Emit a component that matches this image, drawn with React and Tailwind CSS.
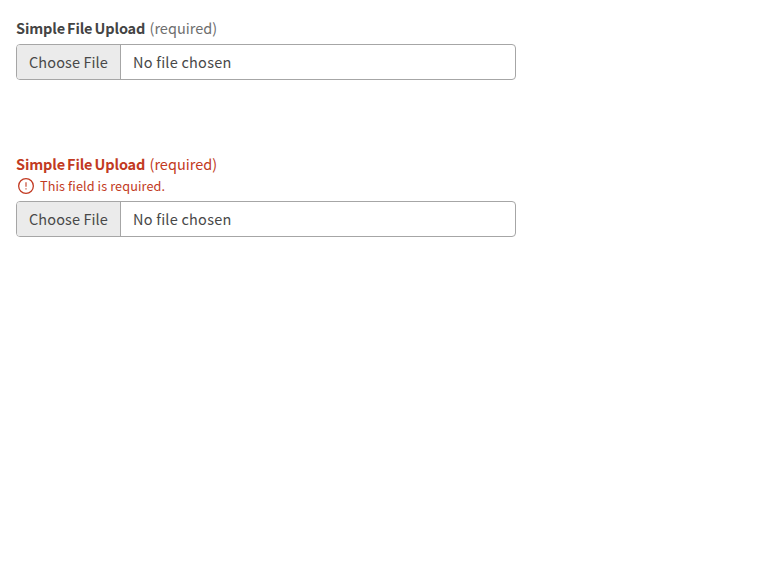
function AlertIcon() {
  return (
    <svg className="-mt-0.5 block size-4 shrink-0" viewBox="0 0 16 16" fill="none" stroke="currentColor">
      <circle cx="8" cy="8" r="7.35" strokeWidth="1.3" />
      <path d="M8 4.2v4.6" strokeWidth="1.1" />
      <path d="M8 10.3v1.3" strokeWidth="1.1" />
    </svg>
  );
}

function FileField({ error }) {
  return (
    <div className="w-[500px]">
      <div className={"flex h-6 items-center whitespace-nowrap text-[14.5px] " + (error ? "text-[#c23a22]" : "text-[#444444]")}>
        <span className="w-[133.5px] font-bold tracking-[-0.14px] [word-spacing:-1px]">Simple File Upload</span>
        <span className={error ? "" : "text-[#6e6e6e]"}>(required)</span>
      </div>
      {error && (
        <div className="flex h-[21px] items-center gap-1.5 pl-0.5 text-[12.7px] tracking-[0.1px] text-[#c23a22]">
          <AlertIcon />
          <span className="-mt-0.5">{error}</span>
        </div>
      )}
      <div className="mt-1 flex h-9 overflow-hidden rounded border border-[#a6a6a6] text-[14.5px] text-[#484848]">
        <button type="button" className="flex w-[104px] items-center whitespace-nowrap border-r border-[#a6a6a6] bg-[#ebebeb] pl-3 tracking-[0.1px]">
          Choose File
        </button>
        <span className="flex items-center whitespace-nowrap pl-3 tracking-[0.23px]">No file chosen</span>
      </div>
    </div>
  );
}

export default function App() {
  return (
    <main className="flex min-h-screen flex-col gap-[72px] bg-white px-4 pt-4 font-['Noto_Sans_CJK_SC',sans-serif]">
      <FileField />
      <FileField error="This field is required." />
    </main>
  );
}
